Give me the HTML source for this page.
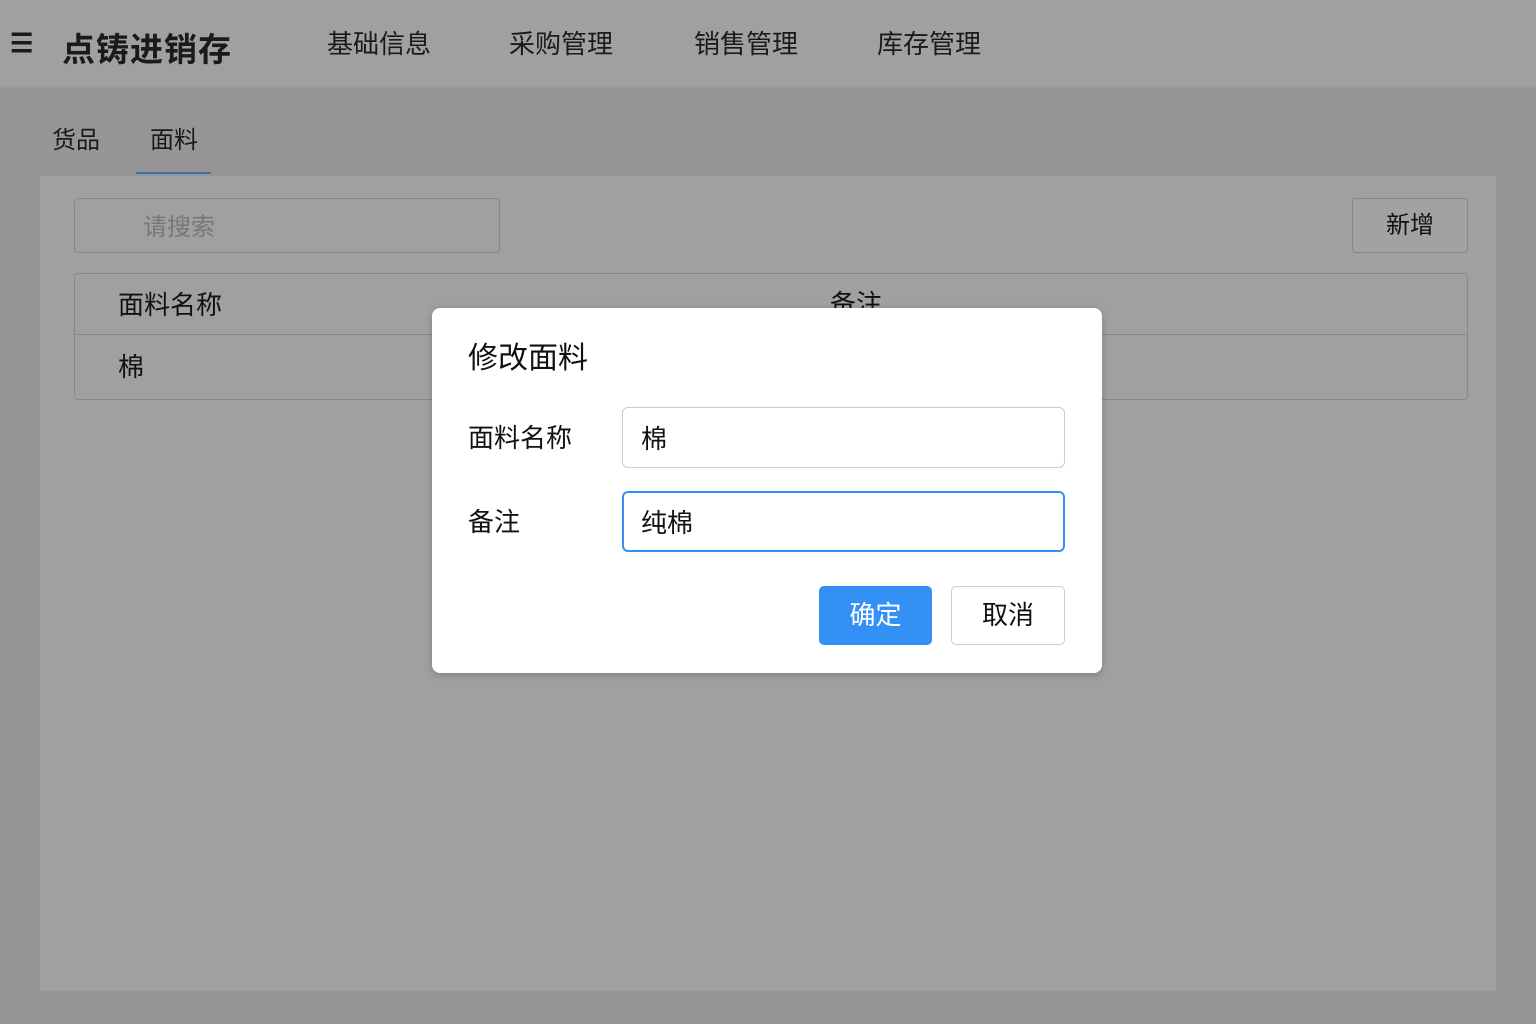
<!DOCTYPE html>
<html><head><meta charset="utf-8"><style>
*{margin:0;padding:0;box-sizing:border-box}
body{width:1536px;height:1024px;overflow:hidden;background:#969696;font-family:"Liberation Sans","Noto Sans CJK SC",sans-serif;color:#111;position:relative}
.hdr{position:absolute;left:0;top:0;width:1536px;height:88px;background:#a0a0a0;border-bottom:2px solid #9a9a9a}
.hdr span{position:absolute;top:26px;font-size:26px;color:#1a1a1a}
.logo{font-weight:bold;font-size:33px!important;top:23px!important;letter-spacing:1px}
.tabs span{position:absolute;top:120px;font-size:24px;color:#1a1a1a}
.ul{position:absolute;left:136px;top:172px;width:75px;height:2px;background:#3d6fa3}
.card{position:absolute;left:40px;top:176px;width:1456px;height:815px;background:#a0a0a0}
.search{position:absolute;left:74px;top:198px;width:426px;height:55px;border:1px solid #888;border-radius:4px;background:#a0a0a0;color:#777;font-size:24px;padding:8px 0 0 68px}
.add{position:absolute;left:1352px;top:198px;width:116px;height:55px;border:1px solid #888;border-radius:4px;background:#a2a2a2;font-size:24px;text-align:center;line-height:53px}
.tbl{position:absolute;left:74px;top:273px;width:1394px;height:127px;border:1px solid #888;border-radius:4px;background:#a0a0a0}
.tbl .line{position:absolute;left:0;right:0;top:60px;height:1px;background:#888}
.tbl span{position:absolute;font-size:26px}
.dlg{position:absolute;left:432px;top:308px;width:670px;height:365px;background:#fff;border-radius:8px;box-shadow:0 2px 8px rgba(0,0,0,.2)}
.dlg .t{position:absolute;left:36px;top:25px;font-size:30px}
.dlg .l{position:absolute;left:36px;font-size:26px}
.inp{position:absolute;left:190px;width:443px;height:61px;border:1px solid #ccc;border-radius:6px;font-size:26px;padding:11px 0 0 18px}
.ok{position:absolute;left:387px;top:278px;width:113px;height:59px;background:#3391f5;border-radius:5px;color:#fff;font-size:26px;text-align:center;line-height:59px}
.cc{position:absolute;left:519px;top:278px;width:114px;height:59px;border:1px solid #ccc;border-radius:5px;font-size:26px;text-align:center;line-height:57px}
</style></head><body>
<div class="hdr">
<span style="left:10px;top:28px;font-weight:bold">☰</span>
<span class="logo" style="left:62px">点铸进销存</span>
<span style="left:327px;top:24px">基础信息</span>
<span style="left:509px;top:24px">采购管理</span>
<span style="left:694px;top:24px">销售管理</span>
<span style="left:877px;top:24px">库存管理</span>
</div>
<div class="tabs"><span style="left:52px">货品</span><span style="left:150px">面料</span></div>
<div class="ul"></div>
<div class="card"></div>
<div class="search">请搜索</div>
<div class="add">新增</div>
<div class="tbl"><div class="line"></div>
<span style="left:43px;top:11px">面料名称</span>
<span style="left:755px;top:10px">备注</span>
<span style="left:43px;top:73px">棉</span></div>
<div class="dlg">
<div class="t">修改面料</div>
<div class="l" style="top:110px">面料名称</div>
<div class="inp" style="top:99px">棉</div>
<div class="l" style="top:194px">备注</div>
<div class="inp" style="top:183px;border:2px solid #3391f5;padding:10px 0 0 17px">纯棉</div>
<div class="ok">确定</div>
<div class="cc">取消</div>
</div>
</body></html>
